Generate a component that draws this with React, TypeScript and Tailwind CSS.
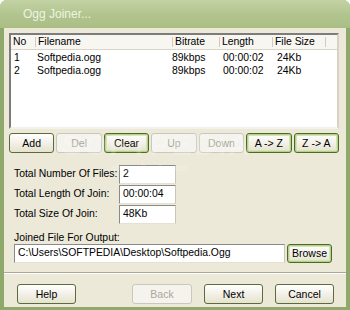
const font = "font-['Liberation_Sans',Arial,sans-serif]";

type BtnKind = "normal" | "focus" | "disabled";

function Btn({ label, kind = "normal", className = "" }: { label: string; kind?: BtnKind; className?: string }) {
  const base = "flex items-center justify-center whitespace-nowrap rounded-[3px] border text-[10.5px] leading-none";
  const look =
    kind === "disabled"
      ? "border-[#cac8bb] bg-[#f4f3ee] text-[#aca899]"
      : kind === "focus"
      ? "border-[#4e6b26] bg-gradient-to-b from-[#ffffff] to-[#e6e2cf] text-black shadow-[inset_0_0_0_1px_#b5cf8c,inset_0_0_0_2px_#d4e4b4]"
      : "border-[#5b6b3c] bg-gradient-to-b from-[#ffffff] to-[#e6e2cf] text-black";
  return <div className={`${base} ${look} ${className}`}>{label}</div>;
}

const rows = [
  { no: "1", name: "Softpedia.ogg", rate: "89kbps", len: "00:00:02", size: "24Kb" },
  { no: "2", name: "Softpedia.ogg", rate: "89kbps", len: "00:00:02", size: "24Kb" },
];

const cols = "grid grid-cols-[22px_137px_47px_53px_53px_1fr]";

function FileList() {
  const heads = ["No", "Filename", "Bitrate", "Length", "File Size", ""];
  return (
    <div className="h-[96px] border-2 border-t-[#7c7c7c] border-l-[#7c7c7c] border-r-[#d6d3c6] border-b-[#f2f1ea] bg-white">
      <div className={`${cols} h-[15px] border-b border-[#d8d5c6] bg-[#f7f6f0]`}>
        {heads.map((h, i) => (
          <div key={i} className="flex items-center whitespace-nowrap pl-[2px] text-[10.4px] leading-none text-black">
            {i > 0 && <span className="mr-[2px] h-[10px] w-px bg-[#cfcbbd]" />}
            {h}
          </div>
        ))}
      </div>
      <div className="pt-[2px]">
        {rows.map((r) => (
          <div key={r.no} className={`${cols} h-[13px] items-center whitespace-nowrap text-[10.4px] leading-none text-black`}>
            <div className="pl-[3px]">{r.no}</div>
            <div className="pl-[4px]">{r.name}</div>
            <div className="pl-[2px]">{r.rate}</div>
            <div className="pl-[6px]">{r.len}</div>
            <div className="pl-[7px]">{r.size}</div>
            <div />
          </div>
        ))}
      </div>
    </div>
  );
}

function Field({ value, className = "" }: { value: string; className?: string }) {
  return (
    <div className={`flex h-[19px] items-center whitespace-nowrap border border-t-[#8a8a8a] border-l-[#8a8a8a] border-r-[#c9c6b8] border-b-[#e5e2d4] bg-white pl-[3px] text-[10.4px] leading-none text-black ${className}`}>
      {value}
    </div>
  );
}

export default function App() {
  return (
    <div className={`${font} relative flex h-[310px] w-[350px] flex-col overflow-hidden rounded-t-[7px] bg-[#8fa86c]`}>
      {/* title bar */}
      <div className="flex h-[28px] items-center bg-gradient-to-b from-[#c3d3a4] via-[#b2c58f] to-[#a9be85] pl-[23px]">
        <span className="text-[12px] text-[#eef3e2]">Ogg Joiner...</span>
      </div>

      {/* client area */}
      <div className="mx-[4px] mb-[3px] flex flex-1 flex-col bg-[#ece9d8]">
        <div className="pl-[5px] pr-[7px] pt-[5px]">
          <FileList />

          <div className="mt-[4px] grid h-[20px] grid-cols-7 gap-[2px]">
            <Btn label="Add" />
            <Btn label="Del" kind="disabled" />
            <Btn label="Clear" kind="focus" />
            <Btn label="Up" kind="disabled" />
            <Btn label="Down" kind="disabled" />
            <Btn label="A -> Z" kind="focus" />
            <Btn label="Z -> A" kind="focus" />
          </div>

          <div className="mt-[12px] flex flex-col gap-[1px] pl-[5px]">
            {[
              ["Total Number Of Files:", "2"],
              ["Total Length Of Join:", "00:00:04"],
              ["Total Size Of Join:", "48Kb"],
            ].map(([l, v]) => (
              <div key={l} className="flex items-center">
                <span className="w-[105px] whitespace-nowrap text-[10.4px] leading-none text-black">{l}</span>
                <Field value={v} className="w-[57px]" />
              </div>
            ))}
          </div>

          <div className="mt-[7px] whitespace-nowrap pl-[5px] text-[10.4px] leading-[13px] text-black">Joined File For Output:</div>
          <div className="flex gap-[2px] pl-[5px]">
            <Field value="C:\Users\SOFTPEDIA\Desktop\Softpedia.Ogg" className="w-[271px]" />
            <Btn label="Browse" kind="focus" className="h-[19px] w-[45px]" />
          </div>
        </div>

        <div className="mt-[9px] h-[2px] border-t border-b border-t-[#aca899] border-b-white" />

        <div className="flex flex-1 items-start justify-between pl-[13px] pr-[12px] pt-[10px]">
          <Btn label="Help" className="h-[20px] w-[59px]" />
          <div className="flex gap-[12px]">
            <Btn label="Back" kind="disabled" className="h-[20px] w-[60px]" />
            <Btn label="Next" className="h-[20px] w-[59px]" />
            <Btn label="Cancel" className="h-[20px] w-[59px]" />
          </div>
        </div>
      </div>

      {/* watermark */}
      <div className="pointer-events-none absolute left-[62px] top-[122px] text-[30px] font-bold tracking-[2px] text-white/20">
        SOFTPEDIA
      </div>
      <div className="pointer-events-none absolute left-[110px] top-[162px] text-[9px] text-white/35">www.softpedia.com</div>
    </div>
  );
}
